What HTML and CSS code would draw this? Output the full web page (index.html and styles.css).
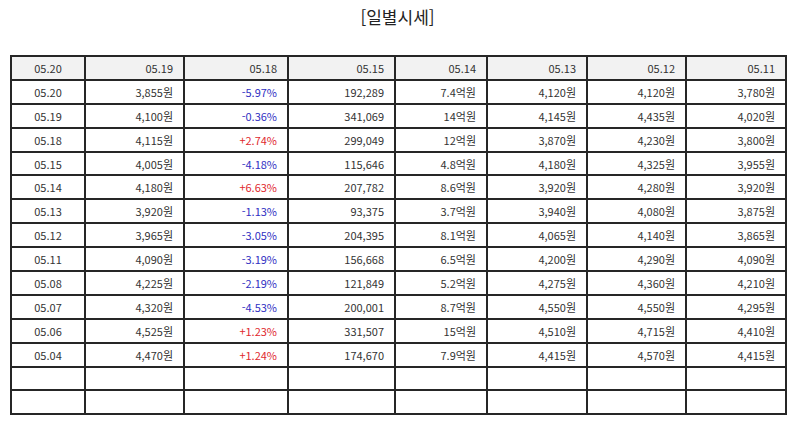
FILE: index.html
```html
<!DOCTYPE html>
<html lang="ko">
<head>
<meta charset="utf-8">
<link rel="stylesheet" href="styles.css">
</head>
<body>
<div class="page">
  <h1 class="title">[일별시세]</h1>
  <table class="grid">
    <colgroup>
      <col class="c1"><col class="c2"><col class="c3"><col class="c4"><col class="c5"><col class="c6"><col class="c7"><col class="c8">
    </colgroup>
    <thead>
      <tr><th class="center">05.20</th><th>05.19</th><th>05.18</th><th>05.15</th><th>05.14</th><th>05.13</th><th>05.12</th><th>05.11</th></tr>
    </thead>
    <tbody>
      <tr><td class="center">05.20</td><td>3,855원</td><td class="down">-5.97%</td><td>192,289</td><td>7.4억원</td><td>4,120원</td><td>4,120원</td><td>3,780원</td></tr>
      <tr><td class="center">05.19</td><td>4,100원</td><td class="down">-0.36%</td><td>341,069</td><td>14억원</td><td>4,145원</td><td>4,435원</td><td>4,020원</td></tr>
      <tr><td class="center">05.18</td><td>4,115원</td><td class="up">+2.74%</td><td>299,049</td><td>12억원</td><td>3,870원</td><td>4,230원</td><td>3,800원</td></tr>
      <tr><td class="center">05.15</td><td>4,005원</td><td class="down">-4.18%</td><td>115,646</td><td>4.8억원</td><td>4,180원</td><td>4,325원</td><td>3,955원</td></tr>
      <tr><td class="center">05.14</td><td>4,180원</td><td class="up">+6.63%</td><td>207,782</td><td>8.6억원</td><td>3,920원</td><td>4,280원</td><td>3,920원</td></tr>
      <tr><td class="center">05.13</td><td>3,920원</td><td class="down">-1.13%</td><td>93,375</td><td>3.7억원</td><td>3,940원</td><td>4,080원</td><td>3,875원</td></tr>
      <tr><td class="center">05.12</td><td>3,965원</td><td class="down">-3.05%</td><td>204,395</td><td>8.1억원</td><td>4,065원</td><td>4,140원</td><td>3,865원</td></tr>
      <tr><td class="center">05.11</td><td>4,090원</td><td class="down">-3.19%</td><td>156,668</td><td>6.5억원</td><td>4,200원</td><td>4,290원</td><td>4,090원</td></tr>
      <tr><td class="center">05.08</td><td>4,225원</td><td class="down">-2.19%</td><td>121,849</td><td>5.2억원</td><td>4,275원</td><td>4,360원</td><td>4,210원</td></tr>
      <tr><td class="center">05.07</td><td>4,320원</td><td class="down">-4.53%</td><td>200,001</td><td>8.7억원</td><td>4,550원</td><td>4,550원</td><td>4,295원</td></tr>
      <tr><td class="center">05.06</td><td>4,525원</td><td class="up">+1.23%</td><td>331,507</td><td>15억원</td><td>4,510원</td><td>4,715원</td><td>4,410원</td></tr>
      <tr><td class="center">05.04</td><td>4,470원</td><td class="up">+1.24%</td><td>174,670</td><td>7.9억원</td><td>4,415원</td><td>4,570원</td><td>4,415원</td></tr>
      <tr><td></td><td></td><td></td><td></td><td></td><td></td><td></td><td></td></tr>
      <tr><td></td><td></td><td></td><td></td><td></td><td></td><td></td><td></td></tr>
    </tbody>
  </table>
</div>
</body>
</html>
```
FILE: styles.css
```css
html, body {
  margin: 0;
  padding: 0;
  background: #ffffff;
}
.page {
  width: 794px;
  padding: 0 9px 0 10px;
  box-sizing: border-box;
  font-family: "Noto Sans CJK KR", "Noto Sans", sans-serif;
  color: #333333;
}
.title {
  margin: 0;
  height: 55px;
  padding-top: 5px;
  box-sizing: border-box;
  text-align: center;
  font-size: 17px;
  font-weight: normal;
  line-height: 24px;
  color: #222222;
}
.grid {
  width: 775px;
  border-collapse: collapse;
  table-layout: fixed;
  font-size: 11px;
}
.c1 { width: 74px; }
.c2 { width: 99px; }
.c3 { width: 104px; }
.c4 { width: 107px; }
.c5 { width: 92px; }
.c6 { width: 100px; }
.c7 { width: 99px; }
.c8 { width: 100px; }
.grid th, .grid td {
  border: 2px solid #262626;
  height: 21.9px;
  padding: 0 10px 0 4px;
  text-align: right;
  font-weight: normal;
  line-height: 14px;
  white-space: nowrap;
}
.grid th {
  background: #f2f2f2;
}
.grid .center {
  text-align: center;
  padding: 0;
}
.down { color: #2f2fc2; }
.up { color: #e0282e; }
```
